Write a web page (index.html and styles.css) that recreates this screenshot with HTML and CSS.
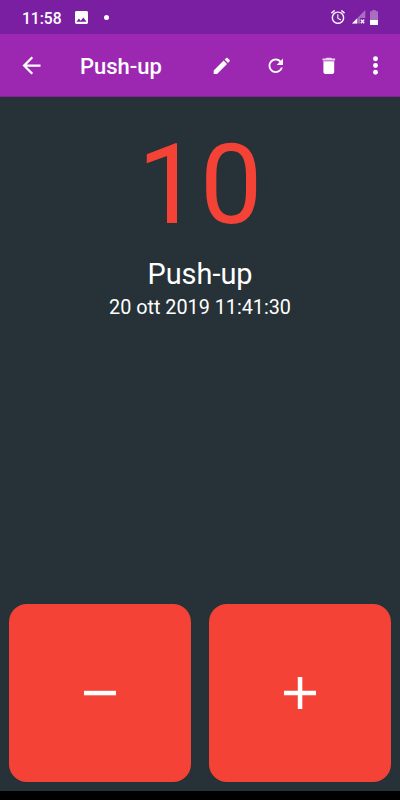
FILE: index.html
```
<!DOCTYPE html>
<html lang="it">
<head>
    <meta charset="utf-8">
    <title>Push-up</title>
    <link rel="stylesheet" href="styles.css">
</head>
<body>
    <div class="status-bar">
        <span class="clock">11:58</span>
        <svg class="status-image" viewBox="3 3 18 18"><path d="M21 19V5c0-1.1-.9-2-2-2H5c-1.1 0-2 .9-2 2v14c0 1.1.9 2 2 2h14c1.1 0 2-.9 2-2zM8.500 13.500l2.500 3.010L14.500 12l4.500 6H5l3.500-4.500z"/></svg>
        <span class="status-dot"></span>
        <div class="status-right">
            <svg class="alarm" viewBox="2 2 20 20"><path d="M22 5.720l-4.600-3.860-1.290 1.530 4.600 3.860L22 5.720zM7.880 3.390L6.600 1.860 2 5.710l1.290 1.530 4.590-3.850zM12.500 8H11v6l4.750 2.850.75-1.230-4-2.370V8zM12 4c-4.970 0-9 4.030-9 9s4.020 9 9 9c4.970 0 9-4.030 9-9s-4.030-9-9-9zm0 16c-3.870 0-7-3.130-7-7s3.130-7 7-7 7 3.130 7 7-3.130 7-7 7z"/></svg>
            <svg class="signal" viewBox="0 0 14 14">
                <path opacity=".35" d="M13.300 0v8H8v5.500H0z"/>
                <path d="M5 8.500v5H0z"/>
                <path class="cross" d="M8.800 9.600l3.400 3.700M12.200 9.600l-3.400 3.700"/>
            </svg>
            <svg class="battery" viewBox="0 0 8 15">
                <path opacity=".35" d="M2.300 0h3.400v1.300H8V10H0V1.300h2.300z"/>
                <path d="M0 10h8v4.300q0 .7-.7.700H.7q-.7 0-.7-.7z"/>
            </svg>
        </div>
    </div>

    <div class="app-bar">
        <button class="icon-button back"><svg class="icon-large" viewBox="0 0 24 24"><path d="M20 11H7.830l5.590-5.590L12 4l-8 8 8 8 1.410-1.410L7.830 13H20v-2z"/></svg></button>
        <h1>Push-up</h1>
        <button class="icon-button"><svg class="icon" viewBox="0 0 24 24"><path d="M3 17.250V21h3.750L17.810 9.940l-3.750-3.750L3 17.250zM20.710 7.040c.39-.39.39-1.020 0-1.410l-2.340-2.340c-.39-.39-1.020-.39-1.410 0l-1.830 1.830 3.750 3.750 1.830-1.830z"/></svg></button>
        <button class="icon-button"><svg class="icon" viewBox="0 0 24 24"><path d="M17.650 6.350C16.200 4.900 14.210 4 12 4c-4.420 0-7.990 3.580-7.990 8s3.570 8 7.990 8c3.730 0 6.840-2.550 7.730-6h-2.080c-.82 2.330-3.040 4-5.650 4-3.310 0-6-2.690-6-6s2.690-6 6-6c1.660 0 3.140.69 4.220 1.780L13 11h7V4l-2.350 2.350z"/></svg></button>
        <button class="icon-button"><svg class="icon" viewBox="0 0 24 24"><path d="M6 19c0 1.100.9 2 2 2h8c1.100 0 2-.9 2-2V7H6v12z"/><path opacity=".8" d="M19 4h-3.500l-1-1h-5l-1 1H5v2h14V4z"/></svg></button>
        <button class="icon-button more"><svg class="icon-large" viewBox="0 0 24 24"><circle cx="12" cy="6" r="2.200"/><circle cx="12" cy="12" r="2.200"/><circle cx="12" cy="18" r="2.200"/></svg></button>
    </div>

    <div class="content">
        <div class="count">10</div>
        <div class="name">Push-up</div>
        <div class="date">20 ott 2019 11:41:30</div>
    </div>

    <div class="controls">
        <button class="control"><svg viewBox="0 0 32 32"><path d="M0 13.800h32v4.500H0z"/></svg></button>
        <button class="control"><svg viewBox="0 0 32 32"><path d="M0 13.800h13.800V0h4.500v13.800H32v4.500H18.300V32h-4.500V18.300H0z"/></svg></button>
    </div>
    <div class="nav-bar"></div>
</body>
</html>
```
FILE: styles.css
```
* { box-sizing: border-box; }
body { margin: 0; height: 800px; display: flex; flex-direction: column; overflow: hidden; background: #263238; color: #fff; font-family: Roboto, sans-serif; }
button { border: none; padding: 0; margin: 0; background: none; cursor: pointer; }
svg { display: block; fill: #fff; }

.status-bar { height: 34px; flex: none; display: flex; align-items: center; padding: 0 22.5px 0 22px; background: #7b1fa2; }
.clock { width: 53px; padding-top: 3px; font-size: 15.6px; font-weight: 500; line-height: 18px; }
.status-image { width: 13px; height: 13px; }
.status-dot { width: 5px; height: 5px; margin-left: 16px; border-radius: 50%; background: #fff; }
.status-right { display: flex; align-items: center; margin-left: auto; }
.alarm { width: 14px; height: 14px; }
.signal { width: 14px; height: 14px; margin-left: 7px; }
.signal .cross { fill: none; stroke: #fff; stroke-width: 1.4; }
.battery { width: 8px; height: 15px; margin-left: 4px; }

.app-bar { height: 63px; flex: none; display: flex; align-items: center; background: #9c27b0; border-bottom: 1px solid #86209c; }
.app-bar h1 { flex: 1; margin: 0; padding-top: 3px; font-size: 22px; font-weight: 500; line-height: 28px; }
.icon-button { width: 53.5px; height: 53px; padding-top: 1px; display: flex; align-items: center; justify-content: center; }
.back { width: 62px; margin-right: 18px; }
.more { width: 40px; padding-right: 1px; margin-right: 4px; }
.icon { width: 21.6px; height: 21.6px; }
.icon-large { width: 27px; height: 27px; }

.content { flex: 1; padding-top: 23px; text-align: center; }
.count { font-size: 111px; line-height: 130px; color: #f44336; }
.name { margin-top: 7px; font-size: 28.9px; line-height: 34px; }
.date { margin-top: 5px; font-size: 19.8px; line-height: 24px; }

.controls { display: grid; grid-template-columns: 1fr 1fr; gap: 18px; padding: 0 9px 9px; }
.control { height: 178px; display: flex; align-items: center; justify-content: center; border-radius: 18px; background: #f44336; }
.control svg { width: 32px; height: 32px; }
.nav-bar { height: 9px; flex: none; background: #000; }
```
